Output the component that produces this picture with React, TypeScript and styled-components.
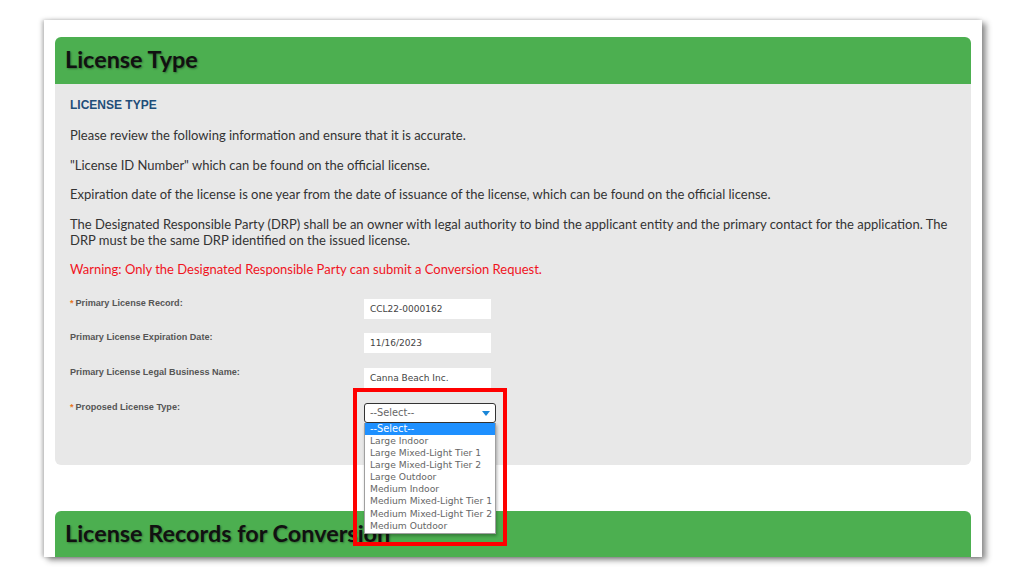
import React from "react";
import styled, { createGlobalStyle } from "styled-components";

const Global = createGlobalStyle`
  html, body { margin: 0; padding: 0; background: #ffffff; }
  body { font-family: "Lato", "Open Sans", sans-serif; }
`;

const Page = styled.div`
  width: 1024px;
  height: 578px;
  padding: 20px 0 0 44px;
  box-sizing: border-box;
  overflow: hidden;
`;

const Window = styled.div`
  position: relative;
  width: 938px;
  height: 537px;
  background: #ffffff;
  box-shadow: 4px 3px 6px rgba(0, 0, 0, 0.45), -2px 0 4px rgba(0, 0, 0, 0.25);
  padding: 17px 11px 0 11px;
  box-sizing: border-box;
  overflow: hidden;
`;

const Panel = styled.section<{ $gapTop?: number }>`
  margin-top: ${(p) => p.$gapTop ?? 0}px;
`;

const PanelHeader = styled.div`
  height: 47px;
  box-sizing: border-box;
  padding: 0 0 3px 10px;
  background: #4caf50;
  border-radius: 6px 6px 0 0;
  display: flex;
  align-items: center;
  font-family: "Lato", sans-serif;
  font-weight: 700;
  font-size: 23.4px;
  color: #111;
  text-shadow: 1px 1px 2px rgba(0, 0, 0, 0.35);
`;

const PanelBody = styled.div`
  background: #e8e8e8;
  border-radius: 0 0 6px 6px;
  padding: 13px 15px 42px 15px;
  color: #333;
  font-size: 13px;
  line-height: 16px;
`;

const SectionTitle = styled.div`
  font-family: "Liberation Sans", Arial, sans-serif;
  font-weight: 700;
  font-size: 12px;
  color: #1f4e79;
  margin-bottom: 14px;
`;

const Para = styled.p<{ $warn?: boolean }>`
  margin: 0 0 13.5px 0;
  color: ${(p) => (p.$warn ? "#f0141e" : "#333")};
`;

const Form = styled.div`
  margin-top: 21.5px;
  display: grid;
  grid-template-columns: 294px auto;
  row-gap: 14.7px;
  align-items: start;
`;

const Label = styled.div`
  font-family: "Liberation Sans", Arial, sans-serif;
  font-weight: 700;
  font-size: 9.1px;
  line-height: 12px;
  color: #555;
  margin-top: -2px;
`;

const Req = styled.span`
  color: #e8761e;
  margin-right: 2px;
`;

const Field = styled.div`
  width: 127px;
  height: 20px;
  background: #fff;
  display: flex;
  align-items: center;
  padding-left: 6px;
  box-sizing: border-box;
  font-family: "DejaVu Sans", Verdana, sans-serif;
  font-size: 9px;
  color: #444;
`;

const SelectWrap = styled.div`
  position: relative;
  width: 132px;
  height: 20px;
  z-index: 5;
`;

const SelectBox = styled.div`
  height: 20px;
  border: 1.5px solid #333;
  border-radius: 3px;
  background: #fff;
  box-sizing: border-box;
  display: flex;
  align-items: center;
  justify-content: space-between;
  padding: 0 5px 0 5px;
  font-family: "DejaVu Sans", Verdana, sans-serif;
  font-size: 9.8px;
  color: #666;
`;

const Arrow = styled.span`
  width: 0;
  height: 0;
  border-left: 4.5px solid transparent;
  border-right: 4.5px solid transparent;
  border-top: 5px solid #1a86d8;
  margin-top: 1px;
`;

const List = styled.ul`
  position: absolute;
  left: 0;
  top: 20px;
  width: 132px;
  margin: 0;
  padding: 0 0 1px 0;
  list-style: none;
  background: #fff;
  border: 1px solid #a0a0a0;
  border-top: none;
  box-sizing: border-box;
  box-shadow: 1px 2px 3px rgba(0, 0, 0, 0.3);
`;

const Item = styled.li<{ $active?: boolean }>`
  height: 12.15px;
  line-height: 12.15px;
  padding-left: 5px;
  font-family: "DejaVu Sans", Verdana, sans-serif;
  font-size: ${(p) => (p.$active ? "9.8px" : "9.2px")};
  white-space: nowrap;
  color: ${(p) => (p.$active ? "#fff" : "#666")};
  background: ${(p) => (p.$active ? "#1e90ff" : "transparent")};
`;

const Highlight = styled.div`
  position: absolute;
  left: -11px;
  top: -15px;
  width: 154px;
  height: 158px;
  border: 4px solid #ff0000;
  box-sizing: border-box;
  pointer-events: none;
`;

const options = [
  "--Select--",
  "Large Indoor",
  "Large Mixed-Light Tier 1",
  "Large Mixed-Light Tier 2",
  "Large Outdoor",
  "Medium Indoor",
  "Medium Mixed-Light Tier 1",
  "Medium Mixed-Light Tier 2",
  "Medium Outdoor",
];

export default function App() {
  return (
    <>
      <Global />
      <Page>
        <Window>
          <Panel>
            <PanelHeader>License Type</PanelHeader>
            <PanelBody>
              <SectionTitle>LICENSE TYPE</SectionTitle>
              <Para>Please review the following information and ensure that it is accurate.</Para>
              <Para>"License ID Number" which can be found on the official license.</Para>
              <Para>
                Expiration date of the license is one year from the date of issuance of the license, which can be
                found on the official license.
              </Para>
              <Para>
                The Designated Responsible Party (DRP) shall be an owner with legal authority to bind the applicant
                entity and the primary contact for the application. The DRP must be the same DRP identified on the
                issued license.
              </Para>
              <Para $warn>Warning: Only the Designated Responsible Party can submit a Conversion Request.</Para>
              <Form>
                <Label>
                  <Req>*</Req>Primary License Record:
                </Label>
                <Field>CCL22-0000162</Field>
                <Label>Primary License Expiration Date:</Label>
                <Field>11/16/2023</Field>
                <Label>Primary License Legal Business Name:</Label>
                <Field>Canna Beach Inc.</Field>
                <Label>
                  <Req>*</Req>Proposed License Type:
                </Label>
                <SelectWrap>
                  <SelectBox>
                    <span>--Select--</span>
                    <Arrow />
                  </SelectBox>
                  <List>
                    {options.map((o, i) => (
                      <Item key={o} $active={i === 0}>
                        {o}
                      </Item>
                    ))}
                  </List>
                  <Highlight />
                </SelectWrap>
              </Form>
            </PanelBody>
          </Panel>
          <Panel $gapTop={46}>
            <PanelHeader>License Records for Conversion</PanelHeader>
          </Panel>
        </Window>
      </Page>
    </>
  );
}
